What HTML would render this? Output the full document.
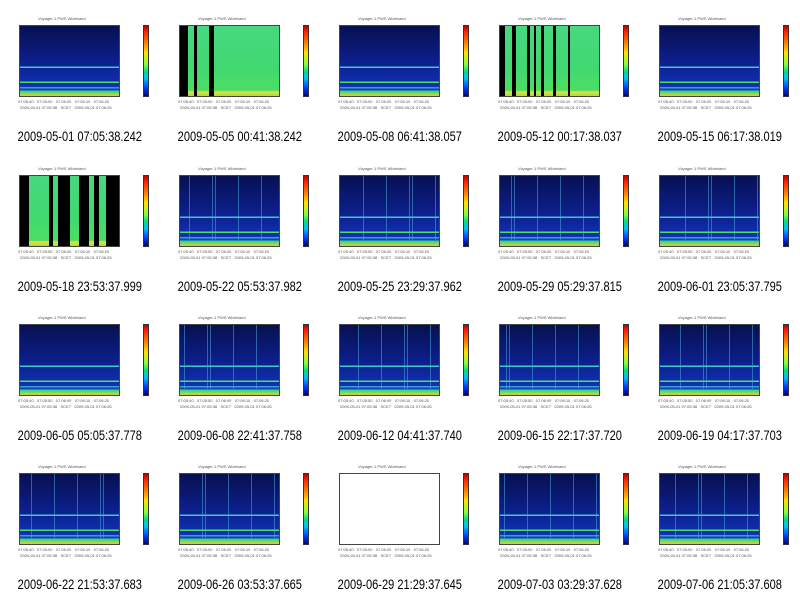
<!DOCTYPE html>
<html><head><meta charset="utf-8"><style>
body{margin:0;width:800px;height:596px;background:#fff;position:relative;overflow:hidden;font-family:"Liberation Sans",sans-serif}
.c{position:absolute;width:160px;height:150px}
.p{position:absolute;left:19px;top:25px;width:101px;height:72px;border:1px solid #444;box-sizing:border-box;overflow:hidden}
.d{background:
 linear-gradient(to bottom,transparent 0,transparent 58%,#40c8c8 58%,#40c8c8 60%,transparent 60%,transparent 79%,#50e060 79%,#50e060 81.5%,transparent 81.5%,transparent 87%,#30a0d0 87%,#30a0d0 89%,transparent 89%,transparent 92%,#30c8a0 92%,#60e060 96%,#c0d040 98%),
 linear-gradient(to bottom,#081050 0%,#0c1e8a 50%,#1030b0 85%,#1840c0 92%);}
.g{background:linear-gradient(to bottom,transparent 0,transparent 92%,#e0e040 94%,#a0e040 100%),linear-gradient(#48d880,#40d870 60%,#50e060);}
.w{background:#fff}
.b{position:absolute;top:0;bottom:0;background:#000}
.cb{position:absolute;left:143px;top:25px;width:6px;height:72px;border:1px solid #333;box-sizing:border-box;background:linear-gradient(to bottom,#c00000,#ff2000 8%,#ff8000 25%,#ffe000 38%,#80ff40 55%,#00e080 65%,#00c0ff 75%,#0040ff 88%,#000080)}
.t{position:absolute;font-size:4px;color:#555;white-space:nowrap}
.cap{position:absolute;left:-20px;width:200px;text-align:center;font-size:14px;color:#000;top:126px;line-height:20px;white-space:nowrap;transform:scaleX(.79);transform-origin:99px 0}
.v{position:absolute;top:0;bottom:8%;width:1px;background:rgba(80,180,220,.5)}
</style></head><body>
<div id="g"></div>
<script>
var caps=["2009-05-01 07:05:38.242","2009-05-05 00:41:38.242","2009-05-08 06:41:38.057","2009-05-12 00:17:38.037","2009-05-15 06:17:38.019",
"2009-05-18 23:53:37.999","2009-05-22 05:53:37.982","2009-05-25 23:29:37.962","2009-05-29 05:29:37.815","2009-06-01 23:05:37.795",
"2009-06-05 05:05:37.778","2009-06-08 22:41:37.758","2009-06-12 04:41:37.740","2009-06-15 22:17:37.720","2009-06-19 04:17:37.703",
"2009-06-22 21:53:37.683","2009-06-26 03:53:37.665","2009-06-29 21:29:37.645","2009-07-03 03:29:37.628","2009-07-06 21:05:37.608"];
var types=["d","g","d","g","d","g","d","d","d","d","d","d","d","d","d","d","d","w","d","d"];
var bars={1:[[0,8],[14,17],[29,34]],3:[[0,5],[12,16],[27,30],[34,36],[41,44],[53,56],[68,70]],5:[[0,9],[29,33],[38,50],[59,69],[74,79],[86,101]]};
var tops=[0,150,299,448];var h="";
for(var i=0;i<20;i++){var r=Math.floor(i/5),c=i%5;
h+='<div class="c" style="left:'+(c*160)+'px;top:'+tops[r]+'px">';
h+='<div class="t" style="left:38px;top:16px">Voyager-1 PWS Wideband</div>';
h+='<div class="p '+types[i]+'">';
if(bars[i])bars[i].forEach(function(b){h+='<div class="b" style="left:'+b[0]+'px;width:'+(b[1]-b[0])+'px"></div>'});
if(types[i]=="d"&&(r>=1&&i!=10)){for(var k=0;k<5;k++)h+='<div class="v" style="left:'+((i*37+k*23)%95+3)+'px"></div>'}
h+='</div><div class="cb"></div>';
h+='<div class="t" style="left:18px;top:99px">07:05:40 &nbsp; 07:05:50 &nbsp; 07:06:00 &nbsp; 07:06:10 &nbsp; 07:06:20</div>';
h+='<div class="t" style="left:20px;top:105px">2009-05-01 07:05:38 &nbsp; SCET &nbsp; 2009-05-01 07:06:26</div>';
h+='<div class="cap">'+caps[i]+'</div></div>';}
document.getElementById("g").innerHTML=h;
</script>
</body></html>
